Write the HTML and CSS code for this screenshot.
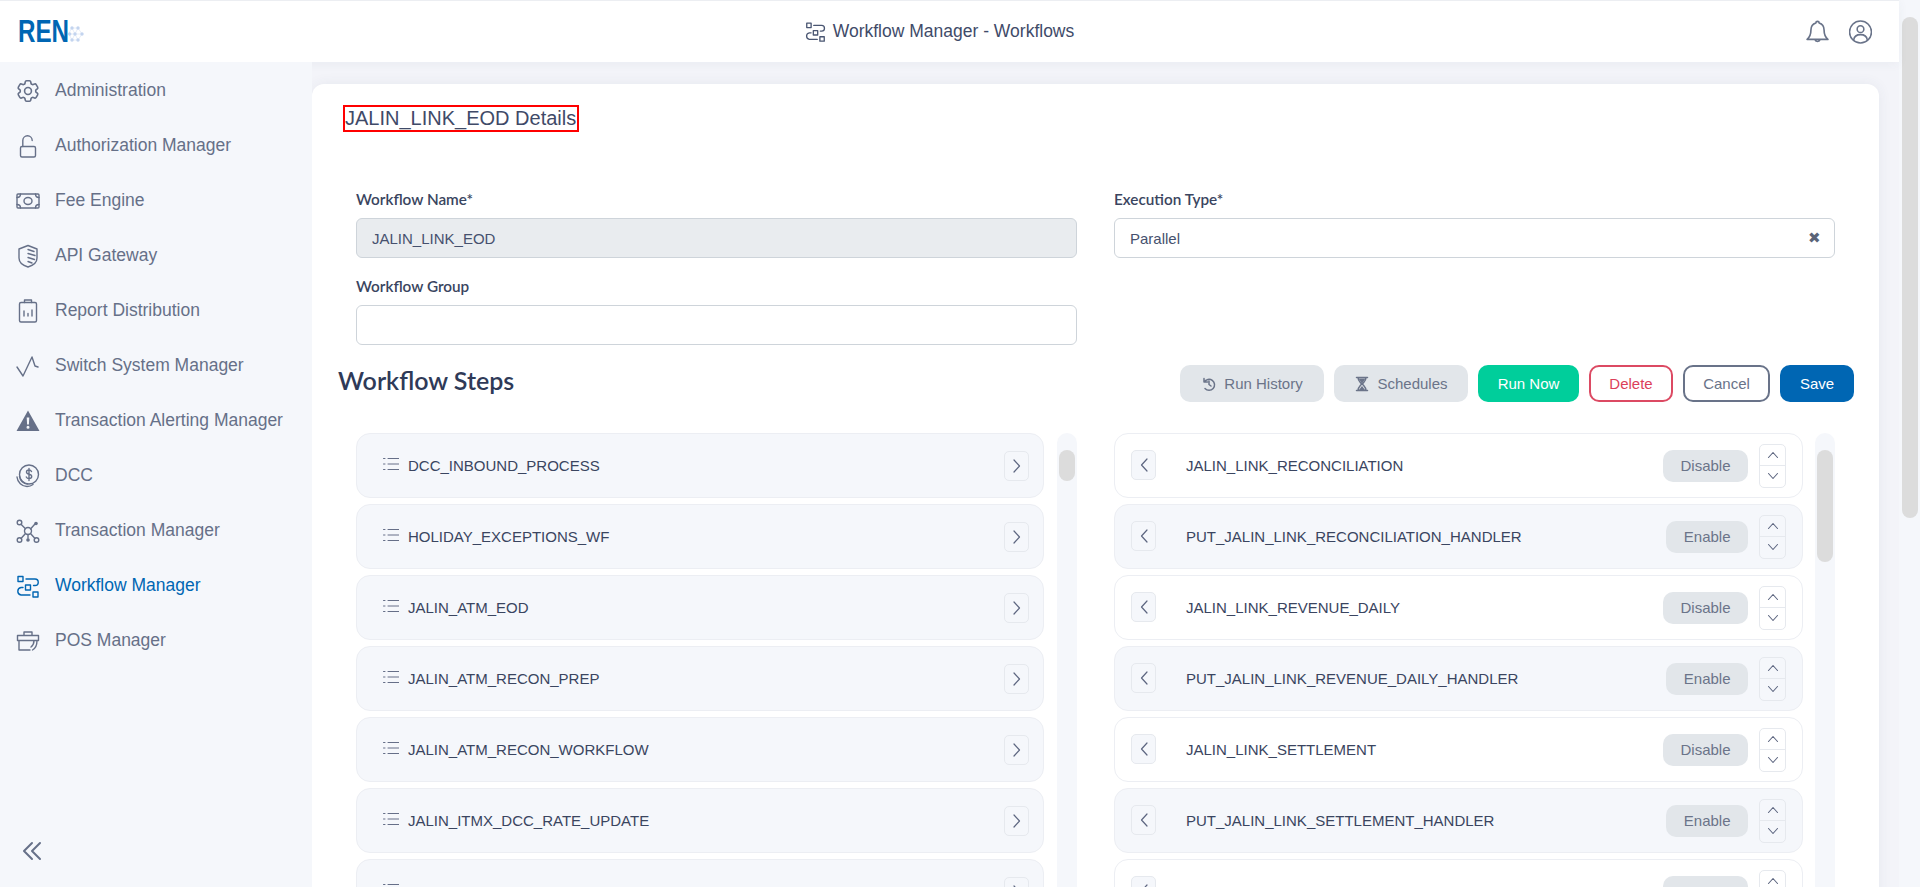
FILE: index.html
```html
<!DOCTYPE html>
<html lang="en">
<head>
  <meta charset="UTF-8">
  <title>Workflow Manager - Workflows</title>
  <link rel="stylesheet" href="styles.css">
</head>
<body>
  <svg class="sprite" xmlns="http://www.w3.org/2000/svg">
    <symbol id="ic-workflow" viewBox="0 0 24 24">
      <path d="M2 2.500h5v5H2zM9.500 11h5v5h-5zM17 18h5v5h-5z"/>
      <path d="M10 5h9a3.200 3.200 0 0 1 0 6.500h-1.500M7 13.500H5a3.800 3.800 0 0 0 0 7.500h9"/>
    </symbol>
    <symbol id="ic-left" viewBox="0 0 12 20"><path d="M9 4L3.500 10 9 16"/></symbol>
    <symbol id="ic-right" viewBox="0 0 12 20"><path d="M3 4l5.500 6L3 16"/></symbol>
    <symbol id="ic-up" viewBox="0 0 14 10"><path d="M2.500 7.500L7 2.500l4.500 5"/></symbol>
    <symbol id="ic-down" viewBox="0 0 14 10"><path d="M2.500 2.500L7 7.500l4.500-5"/></symbol>
    <symbol id="ic-drag" viewBox="0 0 16 14">
      <path d="M5 1.500h11M5 7h11M5 12.500h11"/>
      <path d="M.5 1.500h1.500M.5 7h1.500M.5 12.500h1.500"/>
    </symbol>
  </svg>

  <div class="page">
    <div class="shell">
      <header class="topbar">
        <div class="logo">
          <span class="logo-text">REN</span>
          <svg class="logo-net" viewBox="0 0 16 16">
            <path d="M4 2h6l4 6-4 6H4L1 8zM1 8h13M4 2l6 12M10 2L4 14" stroke="#dfe8f6" stroke-width=".8"/>
            <g class="logo-dots">
              <circle cx="4" cy="2" r="1.700"/><circle cx="10" cy="2" r="1.700"/>
              <circle cx="1.700" cy="8" r="1.700"/><circle cx="7" cy="8" r="1.700"/><circle cx="14" cy="8" r="1.700"/>
              <circle cx="4" cy="14" r="1.700"/><circle cx="10" cy="14" r="1.700"/>
            </g>
          </svg>
        </div>
        <div class="topbar-title">
          <svg class="icon-title"><use href="#ic-workflow"/></svg>
          <span>Workflow Manager - Workflows</span>
        </div>
        <div class="topbar-actions">
          <svg class="icon-top" viewBox="1.500 1.500 21 21.500">
            <path d="M12 2.500a1.500 1.500 0 0 1 1.500 1.500c3.300 1 4.500 3.600 4.500 6.500 0 4.500 1 6.500 3.500 8.500h-19c2.500-2 3.500-4 3.500-8.500 0-2.900 1.200-5.500 4.500-6.500A1.500 1.500 0 0 1 12 2.500zM9.500 19a2.600 2.600 0 0 0 5 0"/>
          </svg>
          <svg class="icon-top" viewBox="1 1 22 22">
            <circle cx="12" cy="12" r="10.500"/><circle cx="12" cy="9.300" r="3.200"/>
            <path d="M5.500 19.500c.5-3.500 3-5 6.500-5s6 1.500 6.500 5"/>
          </svg>
        </div>
      </header>

      <div class="body-row">
        <nav class="sidebar">
          <a class="nav-item">
            <svg class="nav-icon" viewBox="1.500 1.500 21 21">
              <path d="M9.594 3.940c.09-.542.56-.94 1.110-.94h2.593c.55 0 1.020.398 1.110.94l.213 1.281c.063.374.313.686.645.870.074.040.147.083.22.127.325.196.72.257 1.075.124l1.217-.456a1.125 1.125 0 0 1 1.370.49l1.296 2.247a1.125 1.125 0 0 1-.26 1.431l-1.003.827c-.293.24-.438.613-.431.992a6.759 6.759 0 0 1 0 .255c-.007.378.138.75.43.99l1.005.828c.424.35.534.954.26 1.430l-1.298 2.247a1.125 1.125 0 0 1-1.369.491l-1.217-.456c-.355-.133-.75-.072-1.076.124a6.570 6.570 0 0 1-.22.128c-.331.183-.581.495-.644.869l-.213 1.280c-.09.543-.56.941-1.110.941h-2.594c-.55 0-1.020-.398-1.110-.94l-.213-1.281c-.062-.374-.312-.686-.644-.87a6.520 6.520 0 0 1-.22-.127c-.325-.196-.72-.257-1.076-.124l-1.217.456a1.125 1.125 0 0 1-1.369-.49l-1.297-2.247a1.125 1.125 0 0 1 .26-1.431l1.004-.827c.292-.24.437-.613.43-.992a6.932 6.932 0 0 1 0-.255c.007-.378-.138-.75-.43-.99l-1.004-.828a1.125 1.125 0 0 1-.26-1.430l1.297-2.247a1.125 1.125 0 0 1 1.370-.491l1.216.456c.356.133.751.072 1.076-.124.072-.044.146-.087.22-.128.332-.183.582-.495.644-.869l.214-1.281z"/>
              <circle cx="12" cy="12" r="3"/>
            </svg>
            <span>Administration</span>
          </a>
          <a class="nav-item">
            <svg class="nav-icon" viewBox="0 0 24 24">
              <rect x="4.500" y="12.500" width="15" height="10.500" rx="1.500"/>
              <path d="M6.800 12.500V6.500a4.700 4.700 0 0 1 9.400 0"/>
            </svg>
            <span>Authorization Manager</span>
          </a>
          <a class="nav-item">
            <svg class="nav-icon" viewBox="0 0 24 24">
              <rect x="1" y="5" width="22" height="14" rx="1"/>
              <ellipse cx="12" cy="12" rx="4" ry="3.500"/>
              <path d="M1 8.500c2 0 3.500-1.500 3.500-3.500M23 8.500c-2 0-3.500-1.500-3.500-3.500M1 15.500c2 0 3.500 1.500 3.500 3.500M23 15.500c-2 0-3.500 1.500-3.500 3.500"/>
            </svg>
            <span>Fee Engine</span>
          </a>
          <a class="nav-item">
            <svg class="nav-icon" viewBox="0 0 24 24">
              <path d="M12 1.500l9 3.500v9c0 4.500-4 7.500-9 9-5-1.500-9-4.500-9-9V5z"/>
              <path d="M12 5.500l6 2M12 9.500l7 2M12 13.500l6.500 2M12 17.500l4 1.500"/>
            </svg>
            <span>API Gateway</span>
          </a>
          <a class="nav-item">
            <svg class="nav-icon" viewBox="0 0 24 24">
              <rect x="3.500" y="3.500" width="17" height="19.500" rx="1.500"/>
              <path d="M8.500 3.500V1h7v2.500M8 12v5M12 14.500V17M16 11v6"/>
            </svg>
            <span>Report Distribution</span>
          </a>
          <a class="nav-item">
            <svg class="nav-icon" viewBox="0 0 24 24">
              <path d="M1 13l6 9 9-19 3 9 3 1"/>
            </svg>
            <span>Switch System Manager</span>
          </a>
          <a class="nav-item">
            <svg class="nav-icon" viewBox="0 0 24 24">
              <path class="fill" d="M12 1.500L23.500 22H.5zM10.700 8.500l.4 7h1.800l.4-7zM12 16.800a1.500 1.500 0 1 0 0 3 1.500 1.500 0 0 0 0-3z" fill-rule="evenodd"/>
            </svg>
            <span>Transaction Alerting Manager</span>
          </a>
          <a class="nav-item">
            <svg class="nav-icon" viewBox="0 0 24 24">
              <circle cx="13" cy="10.500" r="9.500"/>
              <path d="M1 13c.5 5.500 5 9.500 10 9.500 2.500 0 4.500-.8 6-2M3.500 12.500c.5 4 4 7.500 8 7.500"/>
              <path d="M15.500 7.500c-.5-1-1.500-1.500-2.500-1.500-1.500 0-2.500.8-2.500 2s1 1.900 2.500 2.200 2.700 1 2.700 2.300-1.200 2.100-2.700 2.100c-1.100 0-2.200-.6-2.700-1.600M13 4.500v12"/>
            </svg>
            <span>DCC</span>
          </a>
          <a class="nav-item">
            <svg class="nav-icon" viewBox="0 0 24 24">
              <circle cx="3.500" cy="3.500" r="2.300"/><circle cx="20" cy="4.500" r="1.800" class="fill"/>
              <circle cx="12" cy="12" r="3.500"/>
              <circle cx="3.500" cy="21" r="2.300"/><circle cx="12" cy="21" r="1.800" class="fill"/><circle cx="20.500" cy="21" r="2.300"/>
              <path d="M5 5.200l4.500 4.500M18.500 5.500l-4 4.500M9.500 14.500l-4.500 5M12 15.500v3.700M14.500 14.500l4.500 5"/>
            </svg>
            <span>Transaction Manager</span>
          </a>
          <a class="nav-item nav-active">
            <svg class="nav-icon"><use href="#ic-workflow"/></svg>
            <span>Workflow Manager</span>
          </a>
          <a class="nav-item">
            <svg class="nav-icon" viewBox="0 0 24 24">
              <path d="M8 6.500V3h8v3.500M1.500 6.500h21v5h-21zM3 11.500V21h11M21 11.500c0 4-1 7.500-4.500 9.500M18 11.500c0 3-1 5-3 6.500"/>
            </svg>
            <span>POS Manager</span>
          </a>
          <button class="collapse-btn">
            <svg class="nav-icon" viewBox="0 0 24 24"><path d="M12 4l-8 8 8 8M20 4l-8 8 8 8"/></svg>
          </button>
        </nav>

        <main class="main">
          <section class="card">
            <h1 class="details-title"><span class="highlight">JALIN_LINK_EOD Details</span></h1>

            <form class="form-grid">
              <div class="field">
                <label>Workflow Name*</label>
                <input class="input input-disabled" type="text" value="JALIN_LINK_EOD" disabled>
              </div>
              <div class="field">
                <label>Execution Type*</label>
                <div class="input select-box">
                  <span>Parallel</span>
                  <span class="select-clear">&#10006;</span>
                </div>
              </div>
              <div class="field">
                <label>Workflow Group</label>
                <input class="input" type="text">
              </div>
            </form>

            <div class="steps-head">
              <h2>Workflow Steps</h2>
              <div class="btn-row">
                <button class="btn btn-grey btn-history">
                  <svg class="btn-icon" viewBox="0 0 16 16"><path d="M3 2.500v3.500h3.500M3.300 6A5.500 5.500 0 1 1 4 12.500M8 5v3.500l2 1.500"/></svg>
                  Run History
                </button>
                <button class="btn btn-grey btn-sched">
                  <svg class="btn-icon" viewBox="0 0 16 16"><path d="M2.500 1.500h11M2.500 14.500h11M4 1.500c0 3.500 3 5 3.500 6.500-.5 1.500-3.500 3-3.500 6.500M12 1.500c0 3.500-3 5-3.500 6.500.5 1.500 3.500 3 3.500 6.500"/><path class="fill" d="M4.500 2.500h7L8 7.800zM8 10l3 4H5z"/></svg>
                  Schedules
                </button>
                <button class="btn btn-green btn-run">Run Now</button>
                <button class="btn btn-delete">Delete</button>
                <button class="btn btn-cancel">Cancel</button>
                <button class="btn btn-save">Save</button>
              </div>
            </div>

            <div class="steps-grid">
              <div class="steps-col steps-col-left">
                <ul class="step-list">
                  <li class="step step-grey"><svg class="drag"><use href="#ic-drag"/></svg><span class="step-name">DCC_INBOUND_PROCESS</span><button class="arrow-btn arrow-end"><svg><use href="#ic-right"/></svg></button></li>
                  <li class="step step-grey"><svg class="drag"><use href="#ic-drag"/></svg><span class="step-name">HOLIDAY_EXCEPTIONS_WF</span><button class="arrow-btn arrow-end"><svg><use href="#ic-right"/></svg></button></li>
                  <li class="step step-grey"><svg class="drag"><use href="#ic-drag"/></svg><span class="step-name">JALIN_ATM_EOD</span><button class="arrow-btn arrow-end"><svg><use href="#ic-right"/></svg></button></li>
                  <li class="step step-grey"><svg class="drag"><use href="#ic-drag"/></svg><span class="step-name">JALIN_ATM_RECON_PREP</span><button class="arrow-btn arrow-end"><svg><use href="#ic-right"/></svg></button></li>
                  <li class="step step-grey"><svg class="drag"><use href="#ic-drag"/></svg><span class="step-name">JALIN_ATM_RECON_WORKFLOW</span><button class="arrow-btn arrow-end"><svg><use href="#ic-right"/></svg></button></li>
                  <li class="step step-grey"><svg class="drag"><use href="#ic-drag"/></svg><span class="step-name">JALIN_ITMX_DCC_RATE_UPDATE</span><button class="arrow-btn arrow-end"><svg><use href="#ic-right"/></svg></button></li>
                  <li class="step step-grey"><svg class="drag"><use href="#ic-drag"/></svg><span class="step-name"></span><button class="arrow-btn arrow-end"><svg><use href="#ic-right"/></svg></button></li>
                </ul>
                <div class="mini-scroll"><div class="mini-thumb thumb-short"></div></div>
              </div>

              <div class="steps-col">
                <ul class="step-list">
                  <li class="step step-on"><button class="arrow-btn"><svg><use href="#ic-left"/></svg></button><span class="step-name step-name-right">JALIN_LINK_RECONCILIATION</span><button class="toggle">Disable</button><div class="order"><button><svg><use href="#ic-up"/></svg></button><button><svg><use href="#ic-down"/></svg></button></div></li>
                  <li class="step step-grey"><button class="arrow-btn"><svg><use href="#ic-left"/></svg></button><span class="step-name step-name-right">PUT_JALIN_LINK_RECONCILIATION_HANDLER</span><button class="toggle">Enable</button><div class="order"><button><svg><use href="#ic-up"/></svg></button><button><svg><use href="#ic-down"/></svg></button></div></li>
                  <li class="step step-on"><button class="arrow-btn"><svg><use href="#ic-left"/></svg></button><span class="step-name step-name-right">JALIN_LINK_REVENUE_DAILY</span><button class="toggle">Disable</button><div class="order"><button><svg><use href="#ic-up"/></svg></button><button><svg><use href="#ic-down"/></svg></button></div></li>
                  <li class="step step-grey"><button class="arrow-btn"><svg><use href="#ic-left"/></svg></button><span class="step-name step-name-right">PUT_JALIN_LINK_REVENUE_DAILY_HANDLER</span><button class="toggle">Enable</button><div class="order"><button><svg><use href="#ic-up"/></svg></button><button><svg><use href="#ic-down"/></svg></button></div></li>
                  <li class="step step-on"><button class="arrow-btn"><svg><use href="#ic-left"/></svg></button><span class="step-name step-name-right">JALIN_LINK_SETTLEMENT</span><button class="toggle">Disable</button><div class="order"><button><svg><use href="#ic-up"/></svg></button><button><svg><use href="#ic-down"/></svg></button></div></li>
                  <li class="step step-grey"><button class="arrow-btn"><svg><use href="#ic-left"/></svg></button><span class="step-name step-name-right">PUT_JALIN_LINK_SETTLEMENT_HANDLER</span><button class="toggle">Enable</button><div class="order"><button><svg><use href="#ic-up"/></svg></button><button><svg><use href="#ic-down"/></svg></button></div></li>
                  <li class="step step-on"><button class="arrow-btn"><svg><use href="#ic-left"/></svg></button><span class="step-name step-name-right"></span><button class="toggle toggle-blank"></button><div class="order"><button><svg><use href="#ic-up"/></svg></button><button><svg><use href="#ic-down"/></svg></button></div></li>
                </ul>
                <div class="mini-scroll"><div class="mini-thumb thumb-long"></div></div>
              </div>
            </div>
          </section>
        </main>
      </div>
    </div>

    <div class="page-scroll"><div class="page-thumb"></div></div>
  </div>
</body>
</html>
```

FILE: styles.css
```css
* {
  box-sizing: border-box;
}

html, body {
  height: 100%;
}

body {
  margin: 0;
  overflow: hidden;
  background-color: #f3f4f9;
  font-family: "Liberation Sans", Arial, sans-serif;
  color: #3a4560;
}

ul {
  list-style: none;
  margin: 0;
  padding: 0;
}

button {
  font-family: inherit;
  cursor: pointer;
}

svg {
  fill: none;
  stroke: currentColor;
  stroke-width: 1.5;
  stroke-linecap: round;
  stroke-linejoin: round;
}

.sprite {
  display: none;
}

.fill {
  fill: currentColor;
  stroke: none;
}

.page {
  display: flex;
  height: 100vh;
}

.shell {
  flex: 1;
  min-width: 0;
  display: flex;
  flex-direction: column;
}

/* Top bar */
.topbar {
  flex: none;
  height: 62px;
  display: flex;
  align-items: center;
  padding: 0 27px 0 18px;
  background-color: #fff;
  border-top: 1px solid #eceef2;
  box-shadow: 0 2px 10px rgba(60, 70, 100, 0.05);
  position: relative;
  z-index: 2;
}

.logo {
  flex: 1;
  display: flex;
  align-items: center;
}

.logo-text {
  display: block;
  width: 50px;
  font-size: 31px;
  font-weight: bold;
  line-height: 1;
  color: #0066b3;
  transform: scaleX(0.78);
  transform-origin: left center;
}

.logo-net {
  width: 16px;
  height: 16px;
  margin-top: 5px;
  stroke: none;
}

.logo-dots {
  fill: #c3d4ef;
  stroke: none;
}

.topbar-title {
  display: flex;
  align-items: center;
  gap: 7px;
  margin-right: 11px;
  font-size: 17.5px;
  color: #3f4b69;
}

.icon-title {
  width: 21px;
  height: 21px;
  stroke-width: 1.5;
  color: #4a5672;
}

.topbar-actions {
  flex: 1;
  display: flex;
  justify-content: flex-end;
  gap: 20px;
  color: #697389;
}

.icon-top {
  width: 23px;
  height: 24px;
}

.body-row {
  flex: 1;
  min-height: 0;
  display: flex;
}

/* Sidebar */
.sidebar {
  flex: none;
  width: 312px;
  padding-top: 1px;
  display: flex;
  flex-direction: column;
  background-color: #f5f7fb;
  position: relative;
  z-index: 3;
}

.nav-item {
  flex: none;
  height: 55px;
  display: flex;
  align-items: center;
  gap: 15px;
  padding-left: 16px;
  font-size: 17.5px;
  color: #667088;
}

.nav-icon {
  flex: none;
  width: 24px;
  height: 24px;
  stroke-width: 1.4;
}

.nav-active {
  color: #0066b3;
}

.collapse-btn {
  margin-top: auto;
  margin-bottom: 24px;
  width: 24px;
  height: 24px;
  margin-left: 20px;
  padding: 0;
  border: 0;
  background: none;
  color: #667088;
}

.collapse-btn .nav-icon {
  stroke-width: 2;
}

/* Main card */
.main {
  flex: 1;
  min-width: 0;
  padding: 22px 20px 0 0;
  overflow: hidden;
}

.card {
  min-height: 100%;
  padding: 21px 25px 0 31px;
  background-color: #fff;
  border-radius: 12px 12px 0 0;
  box-shadow: 0 0 14px rgba(60, 70, 100, 0.07);
}

.details-title {
  margin: 0;
  font-size: 20px;
  font-weight: normal;
  line-height: 23px;
}

.highlight {
  display: inline-block;
  padding-right: 1px;
  border: 2px solid #f00;
  color: #3f4a68;
}

.form-grid {
  display: grid;
  grid-template-columns: 721px 721px;
  column-gap: 37px;
  row-gap: 13px;
  margin: 52px 0 0 13px;
}

.field label {
  display: block;
  height: 34px;
  padding-top: 6px;
  font-family: Lato, sans-serif;
  font-size: 15.3px;
  font-weight: 600;
  line-height: 18px;
  color: #3a4560;
}

.input {
  display: block;
  width: 100%;
  height: 40px;
  padding: 0 13px 0 15px;
  border: 1px solid #ced4da;
  border-radius: 6px;
  background-color: #fff;
  font-family: inherit;
  font-size: 15px;
  color: #46516e;
}

.input-disabled {
  background-color: #e9ecef;
}

.select-box {
  display: flex;
  align-items: center;
  justify-content: space-between;
}

.select-clear {
  font-size: 15px;
  color: #5a6478;
}

.steps-head {
  display: flex;
  align-items: center;
  justify-content: space-between;
  margin: 20px 0 31px -5px;
}

.steps-head h2 {
  margin: 0;
  padding-bottom: 7px;
  font-family: Lato, sans-serif;
  font-size: 25px;
  font-weight: 600;
  color: #2f3a58;
}

.btn-row {
  display: flex;
  gap: 10px;
}

.btn {
  display: flex;
  align-items: center;
  justify-content: center;
  height: 37px;
  padding: 0;
  border: 2px solid transparent;
  border-radius: 10px;
  font-size: 15px;
  background: none;
}

.btn-icon {
  width: 16px;
  height: 16px;
  margin-right: 7px;
}

.btn-grey {
  background-color: #e2e6ea;
  color: #6b7489;
}

.btn-history {
  width: 144px;
}

.btn-sched {
  width: 134px;
}

.btn-green {
  width: 101px;
  background-color: #00ce9b;
  color: #fff;
}

.btn-delete {
  width: 84px;
  border-color: #dc4a63;
  color: #dc3f5a;
}

.btn-cancel {
  width: 87px;
  border-color: #697389;
  color: #697389;
}

.btn-save {
  width: 74px;
  background-color: #0066b3;
  color: #fff;
}

/* Step lists */
.steps-grid {
  display: grid;
  grid-template-columns: 721px 721px;
  column-gap: 37px;
  margin-left: 13px;
}

.steps-col {
  display: flex;
  gap: 12px;
}

.steps-col-left {
  gap: 13px;
}

.step-list {
  flex: 1;
  display: flex;
  flex-direction: column;
  gap: 6px;
}

.step {
  height: 65px;
  display: flex;
  align-items: center;
  padding: 0 16px;
  border: 1px solid #eceef3;
  border-radius: 14px;
  font-size: 15px;
  color: #3a4560;
}

.step-grey {
  background-color: #f5f7fb;
}

.step-on {
  background-color: #fff;
}

.drag {
  flex: none;
  width: 16px;
  height: 14px;
  margin: 0 9px 3px 10px;
  stroke-width: 1;
  color: #666f88;
}

.step-name {
  flex: 1;
  min-width: 0;
}

.step-name-right {
  margin-left: 30px;
}

.arrow-btn {
  flex: none;
  width: 25px;
  height: 30px;
  margin-bottom: 2px;
  padding: 0;
  display: flex;
  align-items: center;
  justify-content: center;
  border: 1px solid #e6e9ee;
  border-radius: 5px;
  background-color: #f5f7fb;
  color: #5d6680;
}

.arrow-btn svg {
  width: 12px;
  height: 20px;
  stroke-width: 1.2;
}

.arrow-end {
  margin-right: -2px;
  margin-bottom: 0;
}

.toggle {
  flex: none;
  height: 32px;
  padding: 0 17.5px;
  border: 0;
  border-radius: 10px;
  background-color: #e2e6ea;
  font-size: 15px;
  color: #6b7489;
}

.toggle-blank {
  width: 85px;
}

.order {
  flex: none;
  width: 27px;
  height: 44px;
  margin-left: 11px;
  display: flex;
  flex-direction: column;
  border: 1px solid #e6e9ee;
  border-radius: 5px;
}

.order button {
  flex: 1;
  padding: 0;
  display: flex;
  align-items: center;
  justify-content: center;
  border: 0;
  background: none;
  color: #5d6680;
}

.order button + button {
  border-top: 1px solid #e6e9ee;
}

.order svg {
  width: 14px;
  height: 10px;
  stroke-width: 1.1;
}

.mini-scroll {
  flex: none;
  width: 20px;
  padding: 17px 2px 0;
  background-color: #f5f7fb;
  border-radius: 10px 10px 0 0;
}

.mini-thumb {
  background-color: #dcdcdc;
  border-radius: 8px;
}

.thumb-short {
  height: 31px;
}

.thumb-long {
  height: 112px;
}

/* Page scrollbar */
.page-scroll {
  flex: none;
  width: 21px;
  padding: 17px 2px 0 3px;
  background-color: #f5f7fb;
}

.page-thumb {
  height: 501px;
  background-color: #dcdcdc;
  border-radius: 8px;
}
```
